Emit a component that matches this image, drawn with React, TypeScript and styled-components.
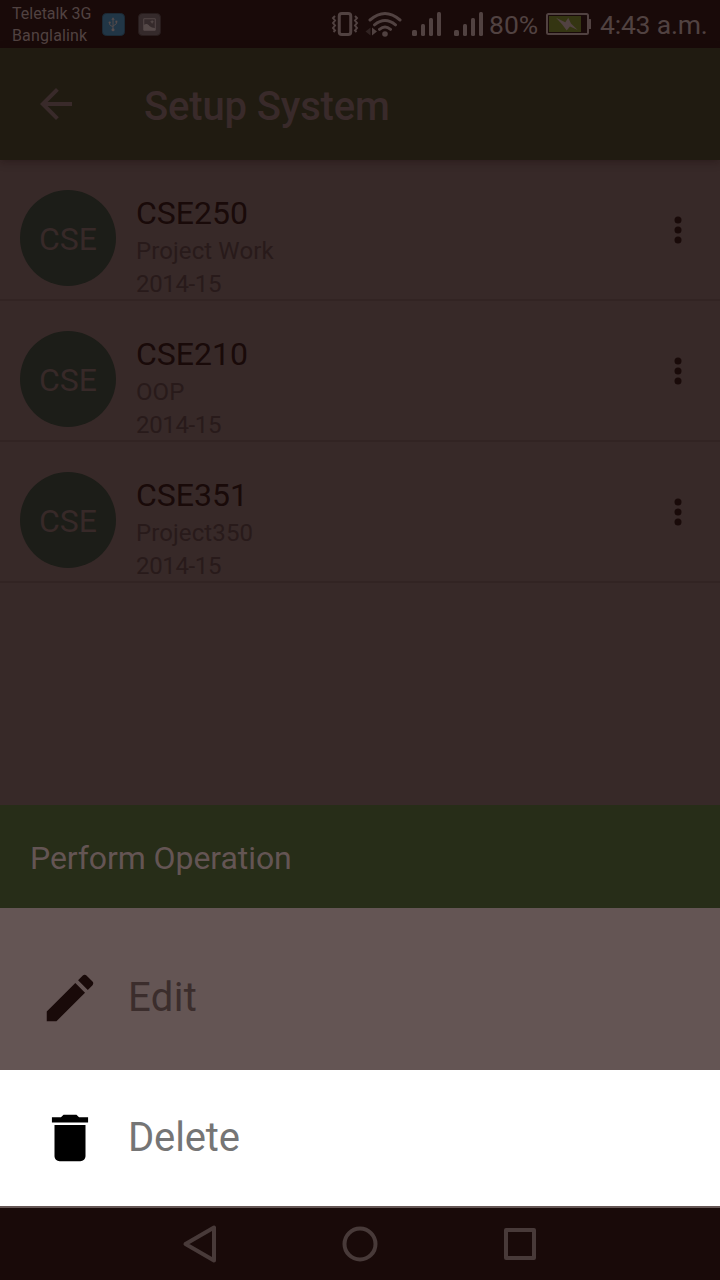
import React from "react";
import styled, { createGlobalStyle } from "styled-components";

const Global = createGlobalStyle`
  * { box-sizing: border-box; }
  body { margin: 0; background: #372928; font-family: Roboto, "Liberation Sans", sans-serif; }
  svg { display: block; flex: none; }
`;

const Screen = styled.div`
  width: 720px;
  height: 1280px;
  display: flex;
  flex-direction: column;
  background: #372928;
  overflow: hidden;
`;

const StatusBar = styled.div`
  height: 48px;
  flex: none;
  display: flex;
  align-items: center;
  padding: 0 12px;
  background: #190a09;
  color: #514241;
`;

const Carriers = styled.div`
  width: 89.5px;
  padding-top: 1px;
  font-size: 16px;
  line-height: 22px;
  white-space: nowrap;
`;

const Carrier = styled.div<{ $tracking?: number }>`
  letter-spacing: ${(p) => p.$tracking ?? 0}px;
`;

const Notices = styled.div`
  display: flex;
  gap: 13px;
  flex: 1;
`;

const Signals = styled.div`
  display: flex;
  align-items: center;
`;

const StatusText = styled.span<{ $width: number; $gap: number; $tracking: number }>`
  width: ${(p) => p.$width}px;
  margin-left: ${(p) => p.$gap}px;
  padding-top: 1px;
  font-size: 26.5px;
  line-height: 32px;
  letter-spacing: ${(p) => p.$tracking}px;
  white-space: nowrap;
`;

const Toolbar = styled.header`
  height: 112px;
  flex: none;
  display: flex;
  align-items: center;
  padding-left: 32px;
  background: #201b11;
  color: #392a2a;
  box-shadow: 0 2px 8px rgba(25, 10, 9, 0.35);
  z-index: 1;
`;

const Title = styled.h1`
  margin: 6px 0 0 64px;
  font-size: 40px;
  line-height: 48px;
  font-weight: 500;
  letter-spacing: -0.16px;
`;

const Courses = styled.main`
  height: 645px;
  flex: none;
`;

const CourseRow = styled.div`
  height: 141px;
  display: flex;
  align-items: flex-start;
  padding: 30px 30px 0 20px;
  border-bottom: 2px solid #322423;
`;

const Avatar = styled.div`
  width: 96px;
  height: 96px;
  flex: none;
  padding-top: 1px;
  border-radius: 50%;
  background: #1c1d18;
  color: #372928;
  font-size: 32px;
  line-height: 96px;
  text-align: center;
`;

const Details = styled.div`
  flex: 1;
  margin: 4px 0 0 20px;
`;

const Code = styled.div`
  margin-bottom: 3px;
  color: #190a09;
  font-size: 32px;
  line-height: 38px;
`;

const Meta = styled.div<{ $tracking?: number }>`
  color: #281a1a;
  font-size: 24px;
  line-height: 33px;
  letter-spacing: ${(p) => p.$tracking ?? 0}px;
`;

const MoreButton = styled.div`
  width: 24px;
  margin-top: 24px;
`;

const SheetTitle = styled.div`
  height: 103px;
  flex: none;
  padding: 2px 0 0 30px;
  background: #272d18;
  color: #645554;
  font-size: 32px;
  line-height: 103px;
  letter-spacing: -0.08px;
`;

const Action = styled.div<{ $active?: boolean }>`
  height: ${(p) => (p.$active ? 136 : 162)}px;
  flex: none;
  display: flex;
  align-items: center;
  padding: ${(p) => (p.$active ? "0 0 0 39px" : "18px 0 0 39px")};
  gap: 27px;
  background: ${(p) => (p.$active ? "#ffffff" : "#645554")};
  color: ${(p) => (p.$active ? "#000000" : "#190a09")};
`;

const ActionLabel = styled.span<{ $active?: boolean }>`
  color: ${(p) => (p.$active ? "#757575" : "#3b2d2c")};
  font-size: 40px;
  line-height: 48px;
  letter-spacing: ${(p) => (p.$active ? -0.15 : 0.4)}px;
`;

const NavBar = styled.nav`
  height: 74px;
  flex: none;
  display: flex;
  align-items: center;
  justify-content: center;
  gap: 112px;
  border-top: 2px solid #645554;
  background: #190a09;
`;

const courses = [
  { code: "CSE250", name: "Project Work", session: "2014-15" },
  { code: "CSE210", name: "OOP", session: "2014-15" },
  { code: "CSE351", name: "Project350", session: "2014-15" },
];

const UsbIcon = () => (
  <svg width="23" height="23" viewBox="0 0 24 24" fill="none" stroke="#554b4c">
    <rect x="0.5" y="0.5" width="23" height="23" rx="4" fill="#213646" stroke="#1c2b36" />
    <path d="M11.500 6v12M8 10v2.200l3.500 2.500M15 9v2.200l-3.500 2.500" />
    <path d="M11.500 4.500l1.800 2.600H9.700z" fill="#554b4c" stroke="none" />
    <circle cx="11.500" cy="17.500" r="1.600" fill="#554b4c" stroke="none" />
    <circle cx="8" cy="10" r="1.200" fill="#554b4c" stroke="none" />
    <path d="M14 8h2v2h-2z" fill="#554b4c" stroke="none" />
  </svg>
);

const ImageIcon = () => (
  <svg width="23" height="23" viewBox="0 0 24 24">
    <rect x="0.5" y="0.5" width="23" height="23" rx="4" fill="#352a2b" stroke="#291d1d" />
    <path d="M6 6h12v12H6z" fill="none" stroke="#554948" />
    <path d="M6 12.500c2-1.500 4-1.500 6 1 1.500 1.500 3.500 1.500 6 2.500v2H6zM14.700 7l.7 1.500 1.500.7-1.500.7-.7 1.500-.7-1.500-1.500-.7 1.500-.7z" fill="#554948" />
  </svg>
);

const VibrateIcon = () => (
  <svg width="30" height="30" viewBox="0 0 30 30" fill="none" stroke="#514241">
    <rect x="9.250" y="4.500" width="11.500" height="21" rx="2.500" strokeWidth="3" />
    <path d="M5 7l-2 2 2 2.500-2 2.500 2 2.500-2 2.500 2 2.500-1.500 1.500M25 7l2 2-2 2.500 2 2.500-2 2.500 2 2.500-2 2.500 1.500 1.500" strokeWidth="2" />
  </svg>
);

const WifiIcon = () => (
  <svg width="42" height="30" viewBox="0 0 42 30" fill="none" stroke="#514241" strokeWidth="3" strokeLinecap="round">
    <path d="M10 11q15-13 30 0M14.500 15.800q10.500-8.500 21 0M19.500 20.300q5.500-4.500 11 0" />
    <circle cx="25" cy="25" r="2.800" fill="#514241" stroke="none" />
    <path d="M10.500 18.500v8l-5-4z" fill="#302221" stroke="none" />
    <path d="M12 18.500v8l5-4z" fill="#514241" stroke="none" />
  </svg>
);

const SignalIcon = () => (
  <svg width="42" height="30" viewBox="0 0 42 30" fill="#514241">
    <rect x="10" y="21" width="5" height="6" rx="1.500" />
    <rect x="19" y="15" width="4" height="12" rx="1.500" />
    <rect x="27" y="9" width="4" height="18" rx="1.500" />
    <rect x="35" y="3" width="4" height="24" rx="1.500" />
  </svg>
);

const BatteryIcon = () => (
  <svg width="46" height="24" viewBox="0 0 46 24">
    <rect x="1" y="2" width="41" height="20" rx="1.500" fill="none" stroke="#514241" strokeWidth="2" />
    <path d="M43 7h1.500q.5 0 .5.500v9q0 .5-.5.500H43z" fill="#514241" />
    <rect x="3" y="4" width="32" height="16" fill="#343512" />
    <path d="M10 5.700l9.300 4.600 3-4.600 2.700 5.700 6.700 6.600-7.700-3.500-3.300 4-4.700-6.200z" fill="#514241" />
  </svg>
);

const BackArrow = () => (
  <svg width="48" height="48" viewBox="0 0 24 24" fill="#392a2a">
    <path d="M20 11H7.830l5.590-5.590L12 4l-8 8 8 8 1.410-1.410L7.830 13H20v-2z" />
  </svg>
);

const MoreIcon = () => (
  <svg width="24" height="32" viewBox="0 0 24 32" fill="#190a09">
    <circle cx="12" cy="6" r="3.500" />
    <circle cx="12" cy="16" r="3.500" />
    <circle cx="12" cy="26" r="3.500" />
  </svg>
);

const PencilIcon = () => (
  <svg width="62" height="62" viewBox="0 0 24 24" fill="currentColor">
    <path d="M3 17.250V21h3.750L17.810 9.940l-3.750-3.750L3 17.250zM20.710 7.040c.39-.39.39-1.020 0-1.410l-2.340-2.340c-.39-.39-1.020-.39-1.410 0l-1.830 1.830 3.750 3.750 1.830-1.830z" />
  </svg>
);

const TrashIcon = () => (
  <svg width="62" height="62" viewBox="0 0 24 24" fill="currentColor">
    <path d="M6 19c0 1.100.9 2 2 2h8c1.100 0 2-.9 2-2V7H6v12zM19 4h-3.500l-1-1h-5l-1 1H5v2h14V4z" />
  </svg>
);

export default function App() {
  return (
    <>
      <Global />
      <Screen>
        <StatusBar>
          <Carriers>
            <Carrier>Teletalk 3G</Carrier>
            <Carrier $tracking={0.15}>Banglalink</Carrier>
          </Carriers>
          <Notices>
            <UsbIcon />
            <ImageIcon />
          </Notices>
          <Signals>
            <VibrateIcon />
            <WifiIcon />
            <SignalIcon />
            <SignalIcon />
            <StatusText $width={57} $gap={3} $tracking={0}>80%</StatusText>
            <BatteryIcon />
            <StatusText $width={108} $gap={8} $tracking={-0.2}>4:43 a.m.</StatusText>
          </Signals>
        </StatusBar>
        <Toolbar>
          <BackArrow />
          <Title>Setup System</Title>
        </Toolbar>
        <Courses>
          {courses.map((course) => (
            <CourseRow key={course.code}>
              <Avatar>CSE</Avatar>
              <Details>
                <Code>{course.code}</Code>
                <Meta $tracking={0.1}>{course.name}</Meta>
                <Meta $tracking={-0.35}>{course.session}</Meta>
              </Details>
              <MoreButton>
                <MoreIcon />
              </MoreButton>
            </CourseRow>
          ))}
        </Courses>
        <SheetTitle>Perform Operation</SheetTitle>
        <Action>
          <PencilIcon />
          <ActionLabel>Edit</ActionLabel>
        </Action>
        <Action $active>
          <TrashIcon />
          <ActionLabel $active>Delete</ActionLabel>
        </Action>
        <NavBar>
          <svg width="48" height="48" viewBox="0 0 48 48" fill="none" stroke="#483a39" strokeWidth="4" strokeLinejoin="round">
            <path d="M38 7.500v33L9.500 24z" />
          </svg>
          <svg width="48" height="48" viewBox="0 0 48 48" fill="none" stroke="#483a39" strokeWidth="4">
            <circle cx="24" cy="24" r="15.500" />
          </svg>
          <svg width="48" height="48" viewBox="0 0 48 48" fill="none" stroke="#483a39" strokeWidth="4" strokeLinejoin="round">
            <rect x="10" y="10" width="28" height="28" />
          </svg>
        </NavBar>
      </Screen>
    </>
  );
}
